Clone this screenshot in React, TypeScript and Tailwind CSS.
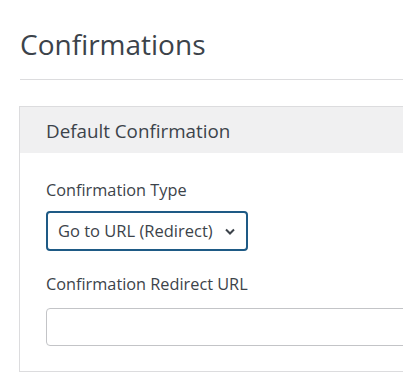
export default function App() {
  return (
    <div
      className="w-[403px] h-[378px] overflow-hidden bg-white text-[#3c434a]"
      style={{ fontFamily: '"Open Sans", "Noto Sans", sans-serif' }}
    >
      <div className="w-[460px] pl-[20px]">
        <h1 className="pt-[26px] text-[28px] leading-[36px] font-normal text-[#3c434a]">
          Confirmations
        </h1>
        <hr className="mt-[17px] border-0 border-t border-[#dcdcde]" />

        <div className="mt-[26px] -ml-px border border-[#dcdcde]">
          <div className="h-[46px] bg-[#f0f0f1] pl-[26px] pt-px text-[18.8px] leading-[46px]">
            Default Confirmation
          </div>

          <div className="pl-[26px] pt-[25px] pb-[25px]">
            <label className="block text-[16.3px] leading-[24px]">Confirmation Type</label>
            <div className="mt-[9px] flex h-[40px] w-[202px] items-center justify-between rounded-[4px] border-2 border-[#1e5a85] pl-[10px] pr-[11px] text-[16.5px] whitespace-nowrap">
              <span>Go to URL (Redirect)</span>
              <svg width="10" height="7" viewBox="0 0 10 7" fill="none">
                <path d="M1 1.5 L5 5.5 L9 1.5" stroke="#3c434a" strokeWidth="2" />
              </svg>
            </div>

            <label className="mt-[21px] block text-[16.3px] leading-[24px]">
              Confirmation Redirect URL
            </label>
            <input
              type="text"
              className="mt-[12px] block h-[38px] w-[420px] rounded-[4px] border border-[#c3c4c7] bg-white outline-none"
            />
          </div>
        </div>
      </div>
    </div>
  );
}
